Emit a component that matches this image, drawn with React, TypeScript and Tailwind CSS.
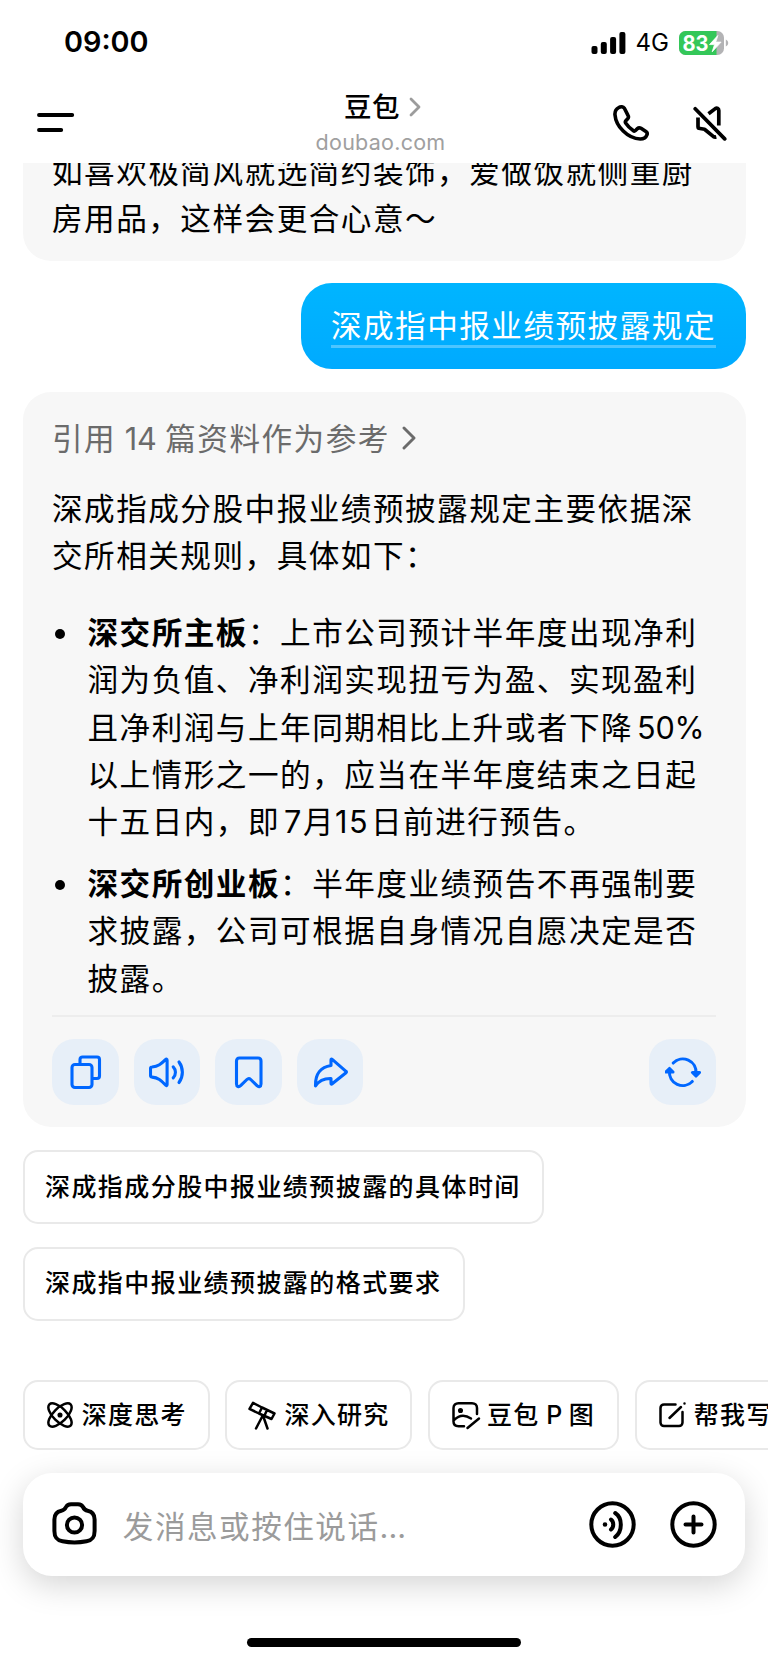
import React from "react";

const FONT = "font-['Inter','Noto_Sans_CJK_SC',sans-serif]";

function StatusBar() {
  return (
    <div className="flex h-[84px] items-center justify-between pt-px pl-[64px] pr-[39px]">
      <div className="text-[28.800px] font-semibold leading-none">09:00</div>
      <div className="flex items-center">
        <svg width="35" height="22" viewBox="0 0 35 22" className="mr-[10px]">
          <rect x="0.5" y="14" width="6" height="8" rx="2" />
          <rect x="9.8" y="10" width="6" height="12" rx="2" />
          <rect x="19.1" y="5" width="6" height="17" rx="2" />
          <rect x="28.4" y="0" width="6" height="22" rx="2" />
        </svg>
        <div className="mr-[10px] text-[24px] leading-none">4G</div>
        <svg width="50" height="24" viewBox="0 0 50 24">
          <defs>
            <clipPath id="battery">
              <rect width="45" height="24" rx="6.5" />
            </clipPath>
          </defs>
          <g clipPath="url(#battery)">
            <rect width="45" height="24" fill="#b3b3b5" />
            <rect width="37.5" height="24" fill="#34c759" />
          </g>
          <path d="M46.8 8.5c1.6.8 2.4 2 2.4 3.5s-.8 2.700-2.400 3.500z" fill="#b3b3b5" />
          <text x="3.500" y="19.500" fontSize="21" fontWeight="700" fill="#fff" textLength="26" lengthAdjust="spacingAndGlyphs">
            83
          </text>
          <path d="M38.800 4.500 30.500 13.600h5l-2.300 7.200 8.900-9.700h-5.200z" fill="#fff" stroke="#fff" strokeWidth="0.800" strokeLinejoin="round" />
        </svg>
      </div>
    </div>
  );
}

function Header() {
  return (
    <div className="flex h-[78px] items-start justify-between pl-[37px] pr-[41px]">
      <svg width="38" height="20" viewBox="0 0 38 20" className="mt-[29px]" stroke="#000" strokeWidth="3.900" strokeLinecap="round">
        <path d="M2 2h33.200M2 17h22.200" />
      </svg>
      <div className="ml-[73px] flex flex-col items-center">
        <div className="mt-[5px] flex items-center pl-[4px]">
          <span className="text-[27.500px] font-medium leading-[36px] tracking-[0.500px]">豆包</span>
          <svg width="12" height="20" viewBox="0 0 12 20" className="ml-[9px]" fill="none" stroke="#9c9c9c" strokeWidth="2.800" strokeLinecap="round" strokeLinejoin="round">
            <path d="M2 2l8 8-8 8" />
          </svg>
        </div>
        <div className="mt-[4px] text-[21.500px] leading-[26px] tracking-[0.250px] text-[#a0a0a0]">doubao.com</div>
      </div>
      <div className="mt-[21px] flex items-center gap-[44px]">
        <svg width="36" height="36" viewBox="0 0 37 37" fill="none" stroke="#000" strokeWidth="3.700" strokeLinejoin="round">
          <path d="M6 2.600C3.500 4 1.800 6.500 2 9.800 3 22 15 34.500 28 35c3.500 0 6-1.800 7-4.500.5-1.400 0-2.500-1.200-3.300l-5-3.200c-1.300-.8-2.600-.7-3.700.3l-2 1.900c-.7.7-1.600.7-2.400.1-3.200-2.200-5.700-4.800-7.700-7.800-.5-.8-.4-1.600.2-2.300l1.900-2c1-1.100 1-2.300.3-3.500L11.700 3.400C10.500 1.700 8 1.400 6 2.600z" />
        </svg>
        <svg width="34" height="35" viewBox="0 0 34 35" fill="none" stroke="#000" strokeWidth="3.700" strokeLinecap="round" strokeLinejoin="round">
          <path d="M2.200 2.700l29.500 30.200" />
          <path d="M15.500 7.800l6.800-5.200c1.700-1 3.500-.2 3.500 1.800v15" strokeLinecap="butt" />
          <path d="M5 11.500v9c0 1.200.8 2 2 2l4.500.8 9 7.300c.8.500 1.500.600 2.800.300" strokeLinecap="butt" />
        </svg>
      </div>
    </div>
  );
}

function Action({ children }: { children: React.ReactNode }) {
  return (
    <button className="flex size-[66.600px] items-center justify-center rounded-[22px] bg-[#e7eff8]">
      <svg width="36" height="36" viewBox="0 0 36 36" className="-mt-px ml-px" fill="none" stroke="#0067ff" strokeWidth="3.100" strokeLinecap="round" strokeLinejoin="round">
        {children}
      </svg>
    </button>
  );
}

function Suggestion({ text }: { text: string }) {
  return (
    <button className="flex h-[74px] items-center rounded-[15px] border-2 border-[#e9e9e9] pl-[20.500px] pr-[21.500px] pb-px text-[25px] font-medium leading-[36px] tracking-[1.430px]">
      {text}
    </button>
  );
}

function Chip({ label, icon, width }: { label: React.ReactNode; icon: React.ReactNode; width: string }) {
  return (
    <button className={`flex h-[70px] shrink-0 items-center rounded-[15px] border-2 border-[#e9e9e9] pl-[21px] text-[25px] font-medium leading-[36px] tracking-[1.300px] whitespace-pre ${width}`}>
      <svg width="30" height="30" viewBox="0 0 30 30" className="mr-[6px] shrink-0" fill="none" stroke="#000" strokeWidth="2.500" strokeLinecap="round" strokeLinejoin="round">
        {icon}
      </svg>
      {label}
    </button>
  );
}

function Bullet({ children }: { children: React.ReactNode }) {
  return (
    <li className="flex">
      <span className="mt-[20px] mr-[23px] ml-[2.500px] size-[10px] shrink-0 rounded-full bg-black" />
      <p className="whitespace-nowrap">{children}</p>
    </li>
  );
}

export default function App() {
  return (
    <div className={`flex h-[1663px] w-[768px] flex-col overflow-hidden bg-white text-black ${FONT}`}>
      <StatusBar />
      <Header />

      <main className="mt-px flex flex-col px-[22.500px] text-[30.600px] leading-[47.350px] tracking-[1.500px]">
        <div className="h-[98px] overflow-hidden rounded-b-[28px] bg-[#f7f7f7] px-[29.500px]">
          <p className="-mt-[15px] whitespace-nowrap">
            如喜欢极简风就选简约装饰，爱做饭就侧重厨
            <br />
            房用品，这样会更合心意～
          </p>
        </div>

        <div className="mt-[22px] h-[86px] self-end rounded-[31px] bg-linear-to-b from-[#00b5ff] to-[#00aaff] px-[29.500px] pt-[18.500px] text-white">
          <p className="h-[46px] border-b-[3px] border-white/30">深成指中报业绩预披露规定</p>
        </div>

        <section className="mt-[22.500px] flex h-[735.500px] flex-col rounded-[28px] bg-[#f7f7f7] px-[29.500px] pt-[23px]">
          <div className="flex items-center text-[#6b6b6b]">
            <span className="whitespace-pre">
              引用<span className="tracking-[-0.100px]"> 14 </span>篇资料作为参考
            </span>
            <svg width="14" height="24" viewBox="0 0 14 24" className="ml-[12.500px]" fill="none" stroke="#6b6b6b" strokeWidth="2.900" strokeLinecap="round" strokeLinejoin="round">
              <path d="M2 2l10 10L2 22" />
            </svg>
          </div>
          <p className="mt-[23px] whitespace-nowrap">
            深成指成分股中报业绩预披露规定主要依据深
            <br />
            交所相关规则，具体如下：
          </p>
          <ul className="mt-[29.300px] flex flex-col gap-[14.500px]">
            <Bullet>
              <strong className="font-bold">深交所主板</strong>：上市公司预计半年度出现净利
              <br />
              润为负值、净利润实现扭亏为盈、实现盈利
              <br />
              且净利润与上年同期相比上升或者下降<span className="ml-[4px] tracking-[-0.200px]">50%</span>
              <br />
              以上情形之一的，应当在半年度结束之日起
              <br />
              十五日内，即<span className="ml-[4px]">7</span>月<span className="mr-[2px]">15</span>日前进行预告。
            </Bullet>
            <Bullet>
              <strong className="font-bold">深交所创业板</strong>：半年度业绩预告不再强制要
              <br />
              求披露，公司可根据自身情况自愿决定是否
              <br />
              披露。
            </Bullet>
          </ul>
          <div className="mt-[12.700px] h-[2px] bg-[#ededed]" />
          <div className="mt-[22px] flex gap-[15px]">
            <Action>
              <path d="M12 9V5.500C12 4 13 3 14.500 3H29c1.500 0 2.500 1 2.500 2.500V22c0 1.500-1 2.500-2.500 2.500h-4" />
              <rect x="4" y="10.500" width="20" height="23" rx="3" />
            </Action>
            <Action>
              <path d="M1.500 14.500v7c0 1 .6 1.600 1.600 1.600 6 .5 9 3.300 13.400 7.900.9 1 1.600.6 1.600-.6V6.300c0-1.200-.7-1.500-1.600-.6C12.100 10 9.100 12.500 3.100 13c-1 0-1.600.6-1.600 1.500z" />
              <path d="M24.200 12.800c3 3 3 8 0 11M30 8c4.500 6 4.500 14.500 0 20.500" />
            </Action>
            <Action>
              <path d="M5.500 7c0-2 1-3 3-3h18.500c2 0 3 1 3 3v23c0 2.800-2.300 3.300-4 1.700l-6.300-6.200c-1.300-1.300-2.500-1.300-3.800 0l-6.300 6.200c-1.700 1.600-4.100 1.100-4.100-1.700z" />
            </Action>
            <Action>
              <path d="M18 6v5.500C8 13 2 20 2.500 32 6 26.500 10.500 24.300 18 24.500v4.700c0 1 .5 1.200 1.200.6L33 18.700c.6-.5.6-1 0-1.400L19.200 5.400c-.7-.6-1.200-.4-1.200.6z" />
            </Action>
            <span className="grow" />
            <Action>
              <path d="M8.200 9A13.300 13.300 0 0 1 31 19.500" />
              <path d="M27.500 18.500h7L31 22z" fill="#0067ff" />
              <path d="M27.300 27.500A13.300 13.300 0 0 1 4.500 17" />
              <path d="M1 18h7L4.500 14.500z" fill="#0067ff" />
            </Action>
          </div>
        </section>
      </main>

      <div className="mt-[23px] flex flex-col items-start gap-[22.500px] pl-[22.500px]">
        <Suggestion text="深成指成分股中报业绩预披露的具体时间" />
        <Suggestion text="深成指中报业绩预披露的格式要求" />
      </div>

      <div className="mt-[59.500px] flex gap-[15.700px] pl-[22.700px]">
        <Chip
          label="深度思考"
          width="w-[187px]"
          icon={
            <>
              <ellipse cx="14" cy="15" rx="15" ry="6.700" transform="rotate(45 14 15)" />
              <ellipse cx="14" cy="15" rx="15" ry="6.700" transform="rotate(-45 14 15)" />
              <circle cx="14" cy="15" r="1.300" fill="#000" />
            </>
          }
        />
        <Chip
          label="深入研究"
          width="w-[187px]"
          icon={
            <path d="M5 2.800 1.500 8.800l9.500 4.700L14 7.500zM14 7.500l12.500 6L23.500 19l-12.500-5.500M19 10l-2.500 5.500M14.500 16 8 28.500M15.500 17 19.500 28.500" />
          }
        />
        <Chip
          label={
            <>
              豆包<span className="tracking-[-0.100px]"> P </span>图
            </>
          }
          width="w-[191px]"
          icon={
            <>
              <path d="M26 14V8c0-3-2-4.700-5-4.700H7.500C4.500 3.300 2.500 5 2.500 8v13.500c0 3 2 4.700 5 4.700H13M3 20c5-5 11-5.500 17-1.500M28 18.500 16.500 28" />
              <circle cx="9.500" cy="10.500" r="1.300" fill="#000" />
            </>
          }
        />
        <Chip
          label="帮我写作"
          width="w-[187px]"
          icon={
            <path d="M17.500 4.500H6C4 4.500 2.500 6 2.500 8v14.500c0 2 1.500 3.500 3.500 3.500h15c2 0 3.500-1.500 3.500-3.500V12M11.500 18 23 7M26.500 3.500v.01" />
          }
        />
      </div>

      <div className="mx-[22.800px] mt-[22.500px] flex h-[103.500px] items-center rounded-[29px] bg-white pl-[29px] pr-[28px] shadow-[0_9px_32px_rgba(0,0,0,0.17)]">
        <svg width="46" height="44" viewBox="0 0 46 44" className="mb-[2px]" fill="none" stroke="#000" strokeWidth="4" strokeLinejoin="round">
          <path d="M19 3.200h7c2.500 0 4 .8 5 2.800 1.200 2.500 2.200 3.400 4.600 3.800 4.700.9 7 3.700 7 8.700V30c0 6.500-2.500 9.200-8.100 10.300a62 62 0 0 1-24 0C4.900 39.200 2.400 36.500 2.400 30V18.500c0-5 2.300-7.800 7-8.700 2.400-.4 3.400-1.300 4.600-3.800 1-2 2.500-2.800 5-2.800z" />
          <circle cx="22.500" cy="24" r="7.600" />
        </svg>
        <span className="ml-[25px] grow pt-[5px] text-[30.600px] leading-[48px] tracking-[1.500px] text-[#9b9b9b]">
          发消息或按住说话<span className="tracking-[0.100px]">...</span>
        </span>
        <svg width="47" height="47" viewBox="0 0 47 47" className="mr-[34.500px]" fill="none" stroke="#000" strokeWidth="4" strokeLinecap="round">
          <circle cx="23.500" cy="23.500" r="21.200" />
          <circle cx="16" cy="23.500" r="2.300" fill="#000" stroke="none" />
          <path d="M22 18.500c3 2.500 3 7.500 0 10M26.200 12c7.500 5 7.500 18 0 24" />
        </svg>
        <svg width="47" height="47" viewBox="0 0 47 47" fill="none" stroke="#000" strokeWidth="4" strokeLinecap="round">
          <circle cx="23.500" cy="23.500" r="21.200" />
          <path d="M23.500 15.500v16M15.500 23.500h16" />
        </svg>
      </div>

      <div className="mx-auto mt-[61.500px] h-[9.500px] w-[274px] rounded-full bg-black" />
    </div>
  );
}
